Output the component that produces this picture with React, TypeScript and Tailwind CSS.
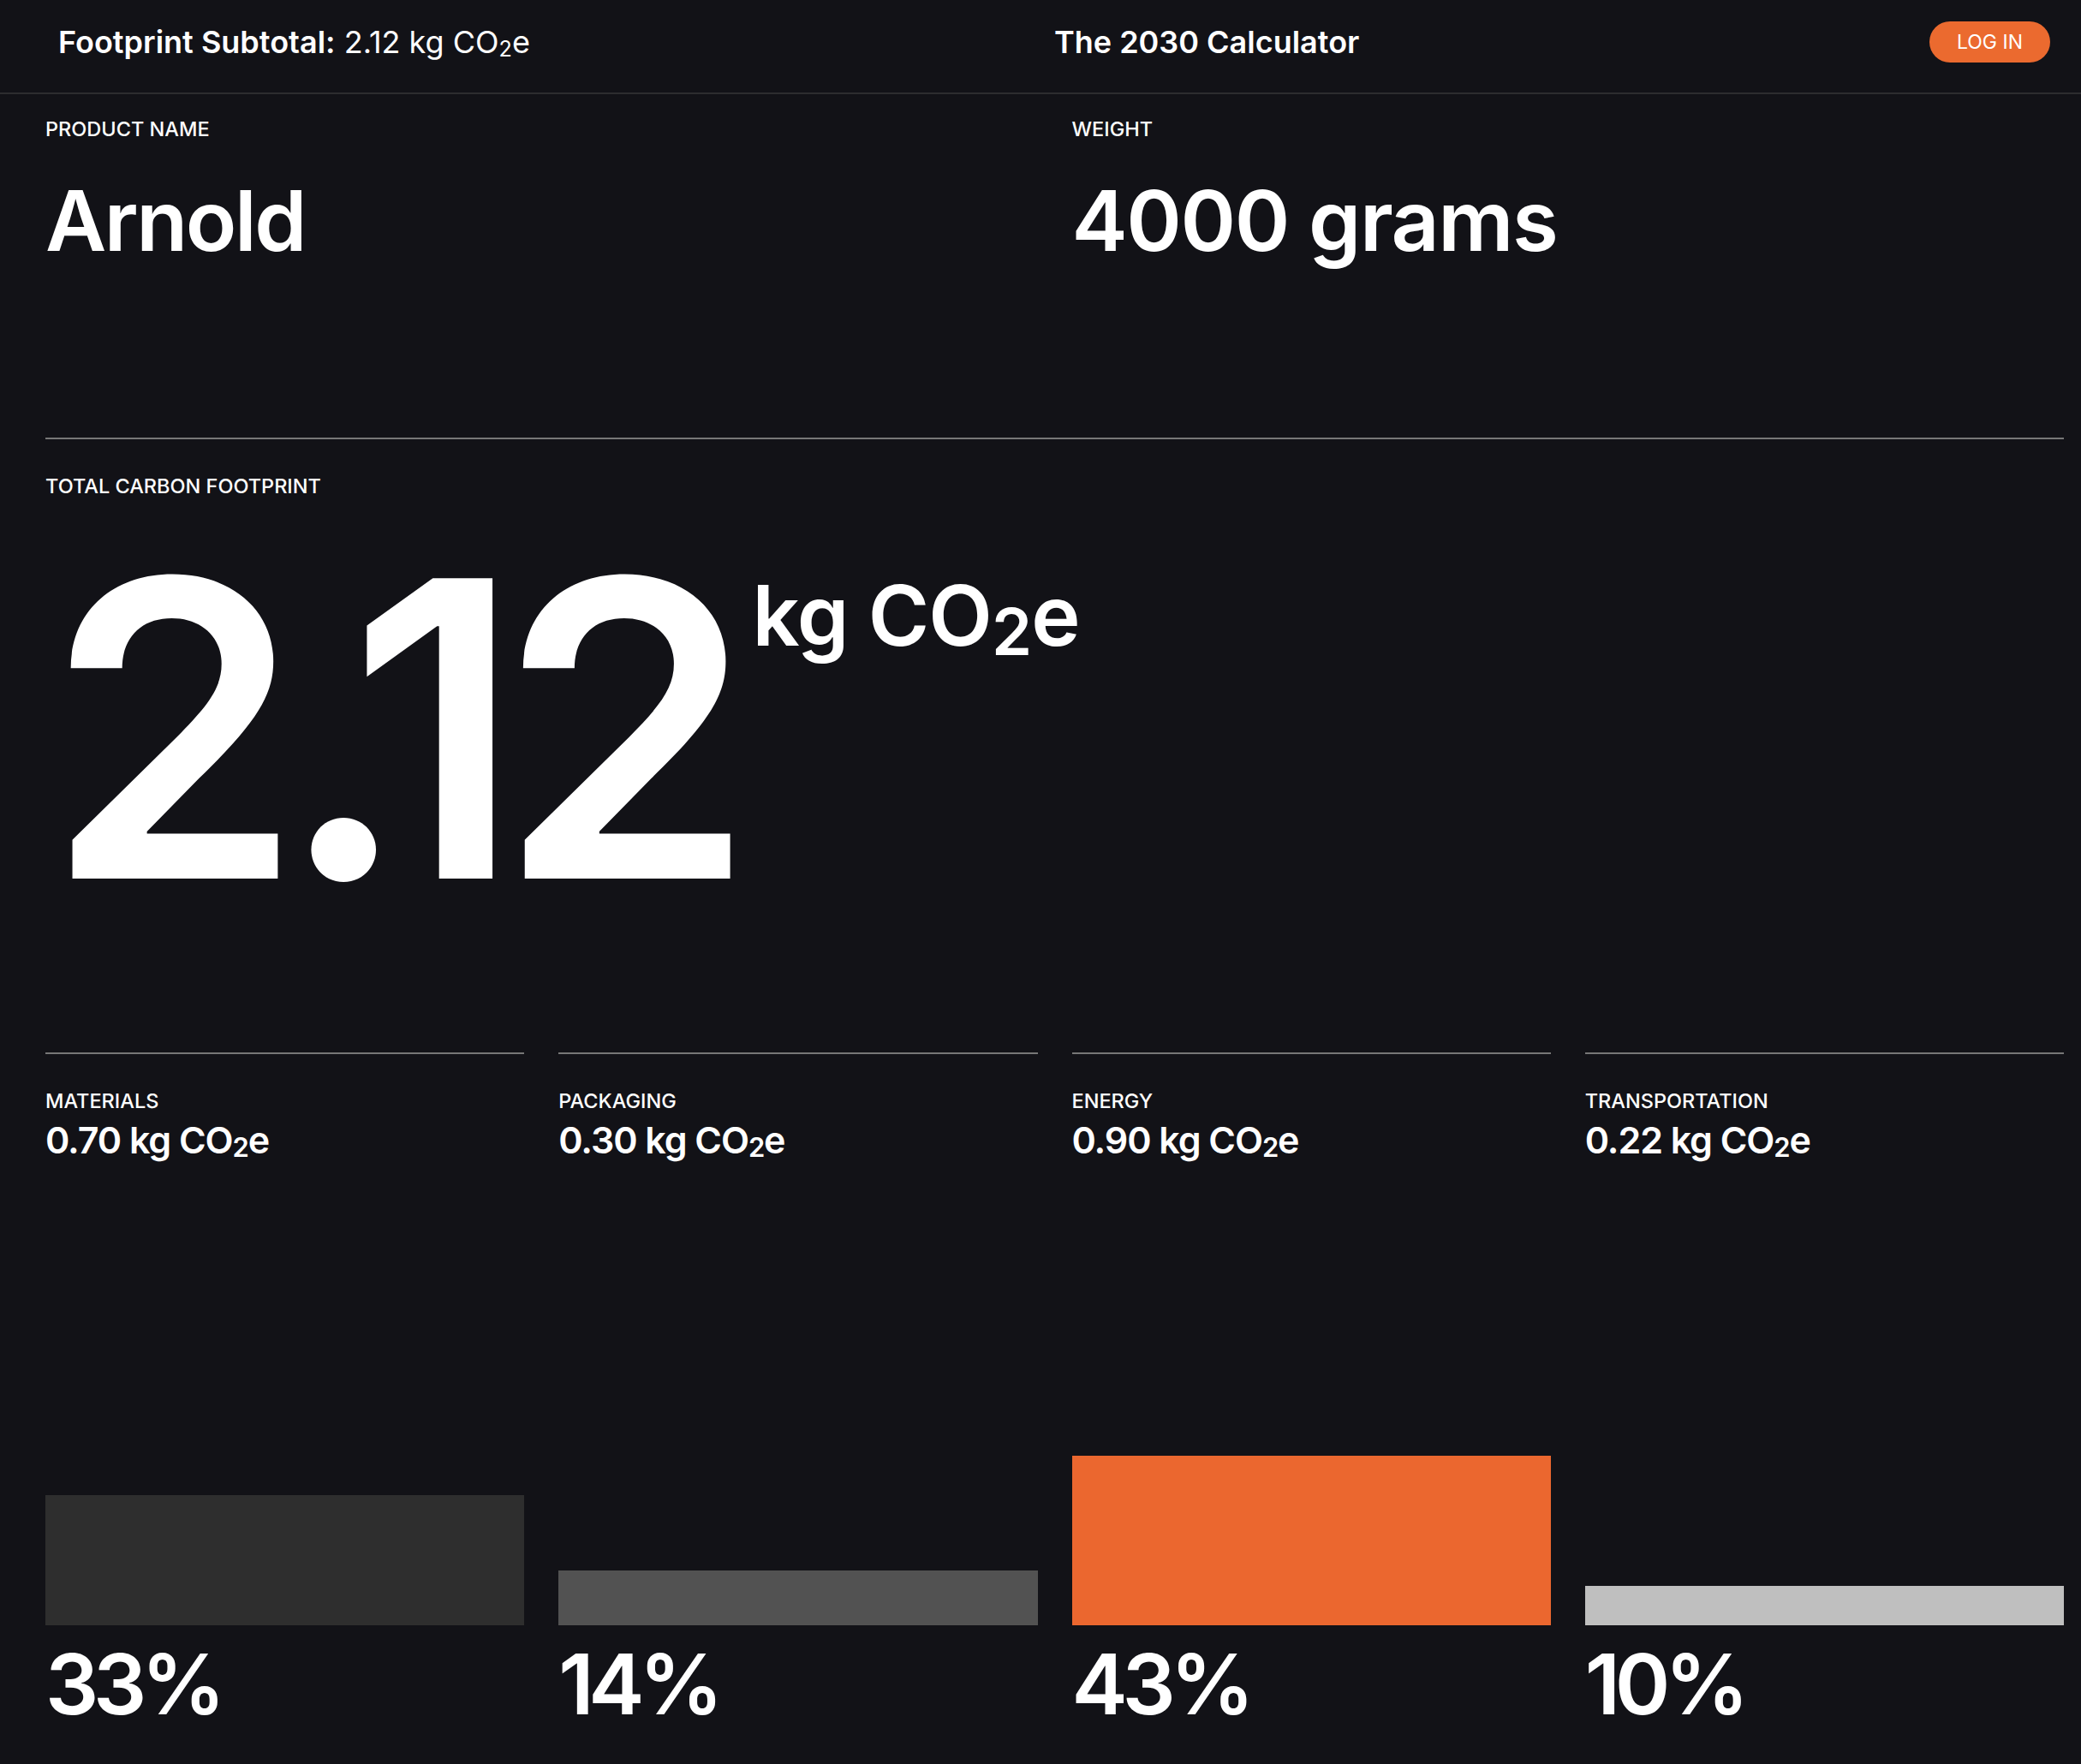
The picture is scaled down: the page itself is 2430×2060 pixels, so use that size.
import React from 'react';

const CO2e = ({ subClass = 'text-[0.7em] bottom-[-0.14em]' }: { subClass?: string }) => (
  <>
    CO<sub className={subClass}>2</sub>e
  </>
);

const App = () => {
  const categories = [
    { label: 'MATERIALS', value: '0.70', pct: 33, color: 'bg-[#2e2e2e]' },
    { label: 'PACKAGING', value: '0.30', pct: 14, color: 'bg-[#525252]' },
    { label: 'ENERGY', value: '0.90', pct: 43, color: 'bg-[#eb672f]' },
    { label: 'TRANSPORTATION', value: '0.22', pct: 10, color: 'bg-[#bfbfbf]' },
  ];

  return (
    <div className="min-h-screen bg-[#121217] text-white font-[Inter,sans-serif]">
      {/* Header */}
      <header className="grid grid-cols-[1163px_1fr_auto] items-center pl-[68px] pr-[36px] pt-[25px] pb-[35px] border-b-2 border-[#2c2c2f]">
        <div className="text-[36px] leading-[48px]">
          <span className="font-semibold">Footprint Subtotal:</span> 2.12 kg <CO2e />
        </div>
        <div className="text-[36px] leading-[48px] font-semibold">The 2030 Calculator</div>
        <button className="h-[48px] px-[32px] rounded-full bg-[#eb6a2f] text-[23px] text-white">LOG IN</button>
      </header>

      <main className="pl-[53px] pr-[20px]">
        {/* Product + weight */}
        <section className="grid grid-cols-2 gap-x-10 pt-[25px] pb-[204px] border-b-2 border-[#777777]">
          <div>
            <div className="text-[23.5px] leading-[32px] font-medium">PRODUCT NAME</div>
            <div className="mt-[42px] text-[98px] leading-none font-semibold tracking-tight">Arnold</div>
          </div>
          <div>
            <div className="text-[23.5px] leading-[32px] font-medium">WEIGHT</div>
            <div className="mt-[42px] text-[98px] leading-none font-semibold tracking-[-0.015em]">4000 grams</div>
          </div>
        </section>

        {/* Total */}
        <section className="pt-[39px] pb-[137px]">
          <div className="text-[23.5px] leading-[32px] font-medium">TOTAL CARBON FOOTPRINT</div>
          <div className="mt-[26px] flex items-start">
            <div className="text-[482px] leading-none font-semibold tracking-[-0.06em]">2.12</div>
            <div className="mt-[60px] ml-[26px] text-[97px] leading-none font-semibold tracking-[-0.01em]">
              kg <CO2e subClass="text-[0.78em] bottom-[-0.14em]" />
            </div>
          </div>
        </section>

        {/* Breakdown */}
        <section className="grid grid-cols-4 gap-x-10">
          {categories.map((c) => (
            <div key={c.label} className="border-t-2 border-[#777777] pt-[39px]">
              <div className="text-[23.5px] leading-[32px] font-medium">{c.label}</div>
              <div className="mt-[8px] text-[43px] leading-none font-semibold tracking-tight">
                {c.value} kg <CO2e subClass="text-[0.72em] bottom-[-0.14em]" />
              </div>
              <div className="h-[545px] flex items-end">
                <div className={`w-full ${c.color}`} style={{ height: `${c.pct * 4.6}px` }} />
              </div>
              <div className="mt-[20px] text-[98px] leading-none font-semibold tracking-[-0.065em]">{c.pct}%</div>
            </div>
          ))}
        </section>
      </main>
    </div>
  );
};

export default App;
